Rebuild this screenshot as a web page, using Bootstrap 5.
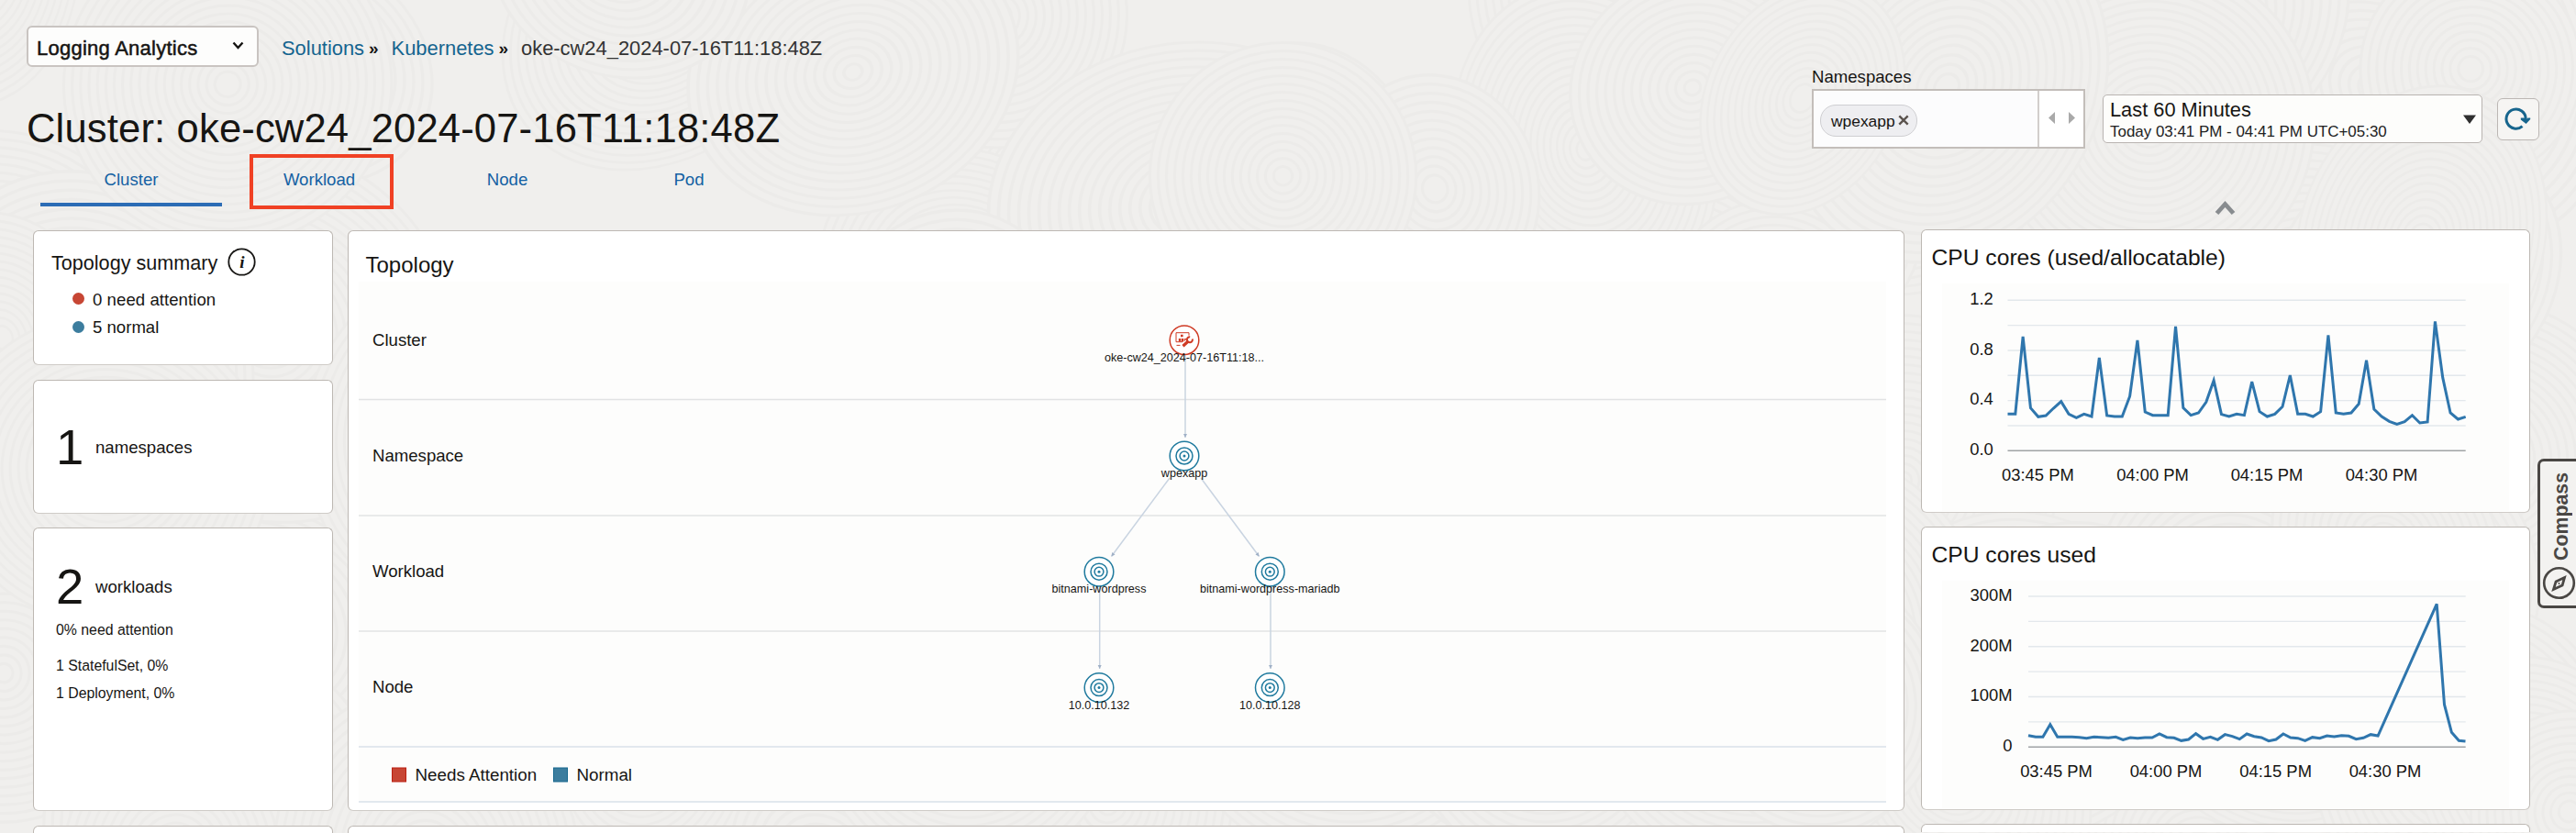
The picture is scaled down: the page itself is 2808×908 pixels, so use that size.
<!DOCTYPE html>
<html lang="en">
<head>
<meta charset="utf-8">
<title>Kubernetes Cluster - Logging Analytics</title>
<link href="https://cdn.jsdelivr.net/npm/bootstrap@5.3.0/dist/css/bootstrap.min.css" rel="stylesheet">
<style>
  body { font-family: "Liberation Sans", Arial, sans-serif; color: #161513; background: #f0efed; width: 2808px; height: 908px; overflow: hidden; font-size: 18.6px; line-height: 28px; }
  svg text { font-family: "Liberation Sans", Arial, sans-serif; fill: #161513; }
  svg { display: block; flex: none; }
  .texture { z-index: -1; }
  .head-left { padding: 28px 0 0 29px; }
  .service { width: 253px; height: 45px; border: 2px solid #c9c4c1; border-radius: 6px; background: #fdfdfc; padding: 5px 14px 0 9px; font-size: 22px; letter-spacing: .25px; color: #161513; -webkit-text-stroke: .5px #161513; }
  .crumbs { font-size: 21.9px; padding-top: 4px; white-space: pre; }
  .crumbs a, .tabs a { color: #15648f; text-decoration: none; }
  .crumbs b { font-size: 19px; margin-left: 5px; width: 24.5px; }
  .title { font-size: 43.6px; letter-spacing: .14px; line-height: 52px; margin: 41px 0 2px; font-weight: 400; }
  .tabs { padding-left: 15px; }
  .tabs a { width: 198px; height: 57px; padding-top: 14px; text-align: center; color: #1461a3; }
  .tabs a.active { border-bottom: 4px solid #2b6cb5; }
  .callout-box { left: 23px; top: 0; width: 157px; height: 60px; border: 4px solid #f04124; }
  .head-right { padding: 72px 40px 0 0; width: 833px; }
  .ns-label { line-height: 24px; padding-bottom: 1px; }
  .ns-box { width: 298px; height: 65px; border: 2px solid #c3beba; background: #fcfcfd; }
  .ns-step { width: 50px; border-left: 2px solid #d2cecc; background: #fff; }
  .chip { height: 35px; width: 106px; border: 1.5px solid #cfcfd2; border-radius: 17px; background: #eeeef1; margin: 15px 0 0 7px; padding: 0 0 0 11px; font-size: 17.4px; }
  .time-box { width: 414px; height: 53px; margin: 31px 0 0 19px; border: 1.5px solid #b9b4b1; border-radius: 5px; background: #fdfdfb; padding: 0 6px 0 7px; }
  .time-main { font-size: 21.8px; line-height: 24px; padding-top: 4px; }
  .time-sub { font-size: 16.95px; line-height: 21px; padding-top: 1px; color: #222; }
  .refresh { width: 46px; height: 46px; margin: 35px 0 0 16px; border: 1.5px solid #bcb7b4; border-radius: 6px; background: #f6f5f3; }
  .collapse-mark { margin: 56px 0 0 439px; }
  .board { padding-left: 36px; margin-top: -1px; height: 658px; overflow: hidden; }
  .panel { flex: none; background: #fff; border: 1.5px solid #bdb8b3; border-bottom-color: #cfcbc7; border-radius: 6px; }
  .panel-stub { height: 9px; border-bottom: 0; border-radius: 6px 6px 0 0; }
  .side { width: 327px; padding-top: 1px; gap: 16px; }
  .main { width: 1697px; padding-top: 1px; gap: 16px; margin-left: 16px; }
  .metrics { width: 664px; gap: 15px; margin-left: 18px; }
  .dot { width: 13px; height: 13px; border-radius: 50%; }
  .big { font-size: 54.5px; line-height: 56px; width: 43px; }
  .fine { font-size: 15.85px; line-height: 24px; }
  .compass { right: -7px; top: 500px; width: 49px; height: 163px; border: 3px solid #4a4744; border-radius: 7px; background: #f3f2f0; color: #4a4744; }
  .compass span { writing-mode: vertical-rl; transform: rotate(180deg); font-weight: 700; font-size: 21.3px; line-height: 28px; margin-left: 4px; }
</style>
</head>
<body class="position-relative">
<svg class="texture position-absolute top-0 start-0" id="texture" width="2808" height="908" aria-hidden="true"></svg>

<header class="d-flex justify-content-between" style="height:251px">
  <div class="head-left">
    <div class="d-flex align-items-center">
      <div class="service d-flex align-items-center justify-content-between">Logging Analytics
        <svg width="13" height="9" viewBox="0 0 13 9" style="margin-top:-7px"><path d="M1.5 1.5l5 5.5 5-5.5" fill="none" stroke="#161513" stroke-width="2.4"/></svg>
      </div>
      <nav class="crumbs d-flex"><a href="#" style="margin-left:25px">Solutions</a><b>»</b><a href="#">Kubernetes</a><b>»</b><span style="color:#333">oke-cw24_2024-07-16T11:18:48Z</span></nav>
    </div>
    <h1 class="title">Cluster: oke-cw24_2024-07-16T11:18:48Z</h1>
    <nav class="tabs d-flex">
      <a href="#" class="active">Cluster</a>
      <a href="#" class="position-relative" style="margin-left:7px">Workload<i class="callout-box position-absolute"></i></a>
      <a href="#" style="margin-left:7px">Node</a>
      <a href="#">Pod</a>
    </nav>
  </div>
  <div class="head-right">
    <div class="d-flex" style="height:90px">
      <div>
        <div class="ns-label">Namespaces</div>
        <div class="ns-box d-flex justify-content-between">
          <div class="chip d-flex align-items-center">wpexapp<svg width="12" height="12" viewBox="0 0 12 12" style="margin:-1px 0 0 3px"><path d="M1.3 1.3l9.4 9.4M10.7 1.3L1.3 10.7" stroke="#5b534e" stroke-width="2.4"/></svg></div>
          <div class="ns-step"><svg width="48" height="61" viewBox="0 0 48 61"><path d="M17 23v13l-7-6.5zM32 23v13l7-6.5z" fill="#a9a9a9"/></svg></div>
        </div>
      </div>
      <div class="time-box d-flex justify-content-between align-items-center">
        <div class="align-self-start"><div class="time-main">Last 60 Minutes</div><div class="time-sub">Today 03:41 PM - 04:41 PM UTC+05:30</div></div>
        <svg width="14" height="10" viewBox="0 0 14 10"><path d="M0 .5h14L7 10z" fill="#2f2f2f"/></svg>
      </div>
      <div class="refresh"><svg width="43" height="43" viewBox="0 0 43 43"><path d="M26.5 29.6A10.6 10.6 0 1 1 30.2 21v2" fill="none" stroke="#17658d" stroke-width="3"/><path d="M24.8 20.5h3.8l2 2 2-2h2.6v1.6L30.6 27l-5.8-4.6z" fill="#17658d"/></svg></div>
    </div>
    <svg class="collapse-mark" width="23" height="17" viewBox="0 0 23 17"><path d="M2.5 14.5l9-10 9 10" fill="none" stroke="#888c8f" stroke-width="4.8"/></svg>
  </div>
</header>

<main class="board d-flex">
  <div class="side d-flex flex-column">
    <section class="panel" style="height:147px;padding:19px 18px 0 19px">
      <div class="d-flex align-items-center" style="height:30px"><span style="font-size:21.6px;padding-top:1px">Topology summary</span>
        <svg style="margin:-2px 0 0 11px" width="31" height="31" viewBox="0 0 31 31"><circle cx="15.5" cy="15.5" r="14.2" fill="none" stroke="#161513" stroke-width="1.8"/><text x="15.8" y="21.5" text-anchor="middle" style="font:italic bold 19px 'Liberation Serif',serif">i</text></svg></div>
      <div class="d-flex align-items-center" style="padding:12px 0 0 23px;letter-spacing:.05px"><span class="dot" style="background:#c74634;margin:-3px 9px 0 0"></span>0 need attention</div>
      <div class="d-flex align-items-center" style="padding:2px 0 0 23px"><span class="dot" style="background:#3c7d9e;margin:-2px 9px 0 0"></span>5 normal</div>
    </section>
    <section class="panel" style="height:146px;padding:45px 23px 0 24px">
      <div class="d-flex align-items-center"><span class="big">1</span><span>namespaces</span></div>
    </section>
    <section class="panel" style="height:309px;padding:36px 23px 0 24px;margin-top:-1px">
      <div class="d-flex align-items-center"><span class="big">2</span><span>workloads</span></div>
      <div class="fine" style="padding-top:7px">0% need attention</div>
      <div class="fine" style="padding-top:15px">1 StatefulSet, 0%</div>
      <div class="fine" style="padding-top:6px">1 Deployment, 0%</div>
    </section>
    <section class="panel panel-stub"></section>
  </div>

  <div class="main d-flex flex-column">
    <section class="panel" style="height:633px;padding:22px 0 0 10.5px">
      <div style="font-size:24px;line-height:30px;padding:0 0 3px 8px">Topology</div>
      <svg id="topology" width="1667" height="569" viewBox="391 307 1667 569"></svg>
    </section>
    <section class="panel panel-stub"></section>
  </div>

  <div class="metrics d-flex flex-column">
    <section class="panel" style="height:309px;padding:14px 0 0 10.5px">
      <div style="font-size:24.65px;line-height:32px">CPU cores (used/allocatable)</div>
      <svg id="ratio" width="630" height="248" viewBox="2106 309 630 248" style="margin-top:12px"></svg>
    </section>
    <section class="panel" style="height:309px;padding:14px 0 0 10.5px">
      <div style="font-size:24.65px;line-height:32px">CPU cores used</div>
      <svg id="used" width="630" height="248" viewBox="2106 633 630 248" style="margin-top:12px"></svg>
    </section>
    <section class="panel panel-stub"></section>
  </div>
</main>

<aside class="compass position-absolute d-flex flex-column align-items-center justify-content-between" style="padding:12px 2px 6px 0">
  <span>Compass</span>
  <svg width="37" height="37" viewBox="0 0 37 37"><circle cx="18.5" cy="18.5" r="16.3" fill="none" stroke="#4a4744" stroke-width="2.6"/><path d="M24.5 12.5l-2.4 8.6-9.6 4.4 2.6-8.6z" fill="none" stroke="#4a4744" stroke-width="2.8"/><circle cx="18.5" cy="19" r="1" fill="#4a4744"/></svg>
</aside>

<script src="https://cdn.jsdelivr.net/npm/bootstrap@5.3.0/dist/js/bootstrap.bundle.min.js"></script>
<script>
  // Overlapping wood-grain rings behind the page
  let seed = 11, rings = '';
  const rnd = () => (seed = (seed * 16807) % 2147483647) / 2147483647;
  for (let n = 0; n < 120; n++) {
    const x = rnd() * 2900 - 50, y = rnd() * 1000 - 50, r = 110 + rnd() * 90, k = .75 + rnd() * .5, a = rnd() * 180;
    rings += `<g transform="translate(${x} ${y}) rotate(${a}) scale(1 ${k})" fill="#f0efed" stroke="#ecebe9" stroke-width="3">`;
    for (let q = r; q > 8; q -= 9) rings += `<circle r="${q}"/>`;
    rings += '</g>';
  }
  document.getElementById('texture').innerHTML = rings;

  // Topology map
  const line = (x1, y1, x2, y2, c, w = 1.5) => `<line x1="${x1}" y1="${y1}" x2="${x2}" y2="${y2}" stroke="${c}" stroke-width="${w}"/>`;
  const label = (x, y, t, s, a = 'start') => `<text x="${x}" y="${y}" font-size="${s}" text-anchor="${a}">${t}</text>`;
  let t = '<rect x="391" y="307" width="1665" height="567" fill="#fdfdfc"/>';
  [435.5, 562, 688, 814, 874].forEach((y, i) => t += line(391, y, 2056, y, i > 2 ? '#d9e0ea' : '#e2e3e4'));
  ['Cluster', 'Namespace', 'Workload', 'Node'].forEach((s, i) => t += label(406, 376.7 + i * 126.2, s, 18.6));
  [[1292, 386, 1292, 477], [1275, 521, 1211.5, 606.5], [1309, 521, 1372.5, 606.5], [1198.7, 640, 1198.7, 729], [1385, 640, 1385, 729]].forEach(e => {
    t += line(...e, '#c9d4e1', 1.5);
    const a = Math.atan2(e[3] - e[1], e[2] - e[0]) * 180 / Math.PI;
    t += `<path d="M0 0l-4-2v4z" transform="translate(${e[2]} ${e[3]}) rotate(${a})" fill="#9fb0c6"/>`;
  });
  [[1291, 370.7, 'oke-cw24_2024-07-16T11:18...'], [1291, 497, 'wpexapp'], [1198, 623.2, 'bitnami-wordpress'], [1384.3, 623.2, 'bitnami-wordpress-mariadb'], [1198, 749.6, '10.0.10.132'], [1384.3, 749.6, '10.0.10.128']].forEach(([x, y, s], i) => {
    const c = i ? '#1f7a9e' : '#cf3a24';
    t += `<g fill="none" stroke="${c}" stroke-width="1.5"><circle cx="${x}" cy="${y}" r="15.8" fill="#fff"/>`;
    t += i ? `<circle cx="${x}" cy="${y}" r="9"/><circle cx="${x}" cy="${y}" r="4.9"/><circle cx="${x}" cy="${y}" r="1.5" fill="${c}" stroke="none"/></g>`
      : `<g transform="translate(${x} ${y})"><path d="M-2-0.5v2.5h-7v-10h14v3" stroke-width="1"/><path d="M-4-6h2.6v2.6h-2.6zM-6.2-1.8h2.6v3.4h-2.6zM-3-1.8h2.4v3.4H-3zM.2-1.8h2.4L.2 1.6z" fill="${c}" stroke="none"/><path d="M-1.5 6.5L4.5 1" stroke-width="3.2"/><path d="M8.8-1.2A3 3 0 1 1 6.2-3.4" stroke-width="2"/><path d="M-8.5 5.7h4"  stroke-width="1"/></g></g>`;
    t += label(x, y + 23, s, 12.6, 'middle');
  });
  t += '<rect x="427.5" y="837" width="15" height="15" fill="#c74634" stroke="#bb1f10"/>' + label(452.5, 851, 'Needs Attention', 18.8);
  t += '<rect x="603.5" y="837" width="15" height="15" fill="#3c7d9e" stroke="#17688e"/>' + label(628.5, 851, 'Normal', 18.8);
  document.getElementById('topology').innerHTML = t;

  // Line charts
  function chart(id, top, x0, x1, y0, y1, ticks, tx, labels, pts) {
    let g = `<rect x="2117" y="${top}" width="618" height="250" fill="#fdfdfc"/>`;
    for (let i = 0; i < 7; i++) { const y = y0 + (y1 - y0) * i / 6; g += line(x0, y, x1, y, i == 6 ? '#a0a3a5' : '#e3e8ec', i == 6 ? 1.5 : 1.4); }
    ticks.forEach((s, i) => g += label(tx, y0 + (y1 - y0) * i / (ticks.length - 1) + 4.8, s, 18.4, 'end'));
    labels.forEach(([x, s]) => g += label(x, y1 + 33, s, 18.4, 'middle'));
    g += `<polyline points="${pts.map(p => p.join()).join(' ')}" fill="none" stroke="#2f76ad" stroke-width="3" stroke-linejoin="miter"/>`;
    document.getElementById(id).innerHTML = g;
  }
  const a = [634,634,381,614,643,639,615,593,634,646,634,642,450,639,642,642,576,393,627,638,638,638,348,614,638,630,595,524,635,642,634,638,528,626,642,634,610,507,634,634,642,626,376,630,634,630,601,458,618,642,658,667,659,638,663,660,331,515,630,651,643];
  chart('ratio', 309, 2188.5, 2687.7, 327.3, 491.3, ['1.2', '0.8', '0.4', '0.0'], 2172.8,
    [[2221.4, '03:45 PM'], [2346.5, '04:00 PM'], [2471, '04:15 PM'], [2596, '04:30 PM']], a.map((v, i) => [2188.5 + i * 8.32, 240 + v / 3]));
  const b = [725,730,730,689,730,730,730,731,734,730,731,733,730,739,732,734,732,732,720,731,733,742,738,719,736,730,739,722,728,737,720,728,732,743,738,720,732,734,742,731,734,726,729,725,727,737,733,722,726];
  const p = b.map((v, i) => [2211 + i * 7.94, 560 + v / 3]);
  p.push([2656.2, 658.3], [2664.5, 768], [2672.4, 798.3], [2680.3, 807.3], [2687.5, 808]);
  chart('used', 632, 2211, 2687.7, 650, 814.3, ['300M', '200M', '100M', '0'], 2193.6,
    [[2241.5, '03:45 PM'], [2361, '04:00 PM'], [2480.6, '04:15 PM'], [2600, '04:30 PM']], p);
</script>
</body>
</html>
